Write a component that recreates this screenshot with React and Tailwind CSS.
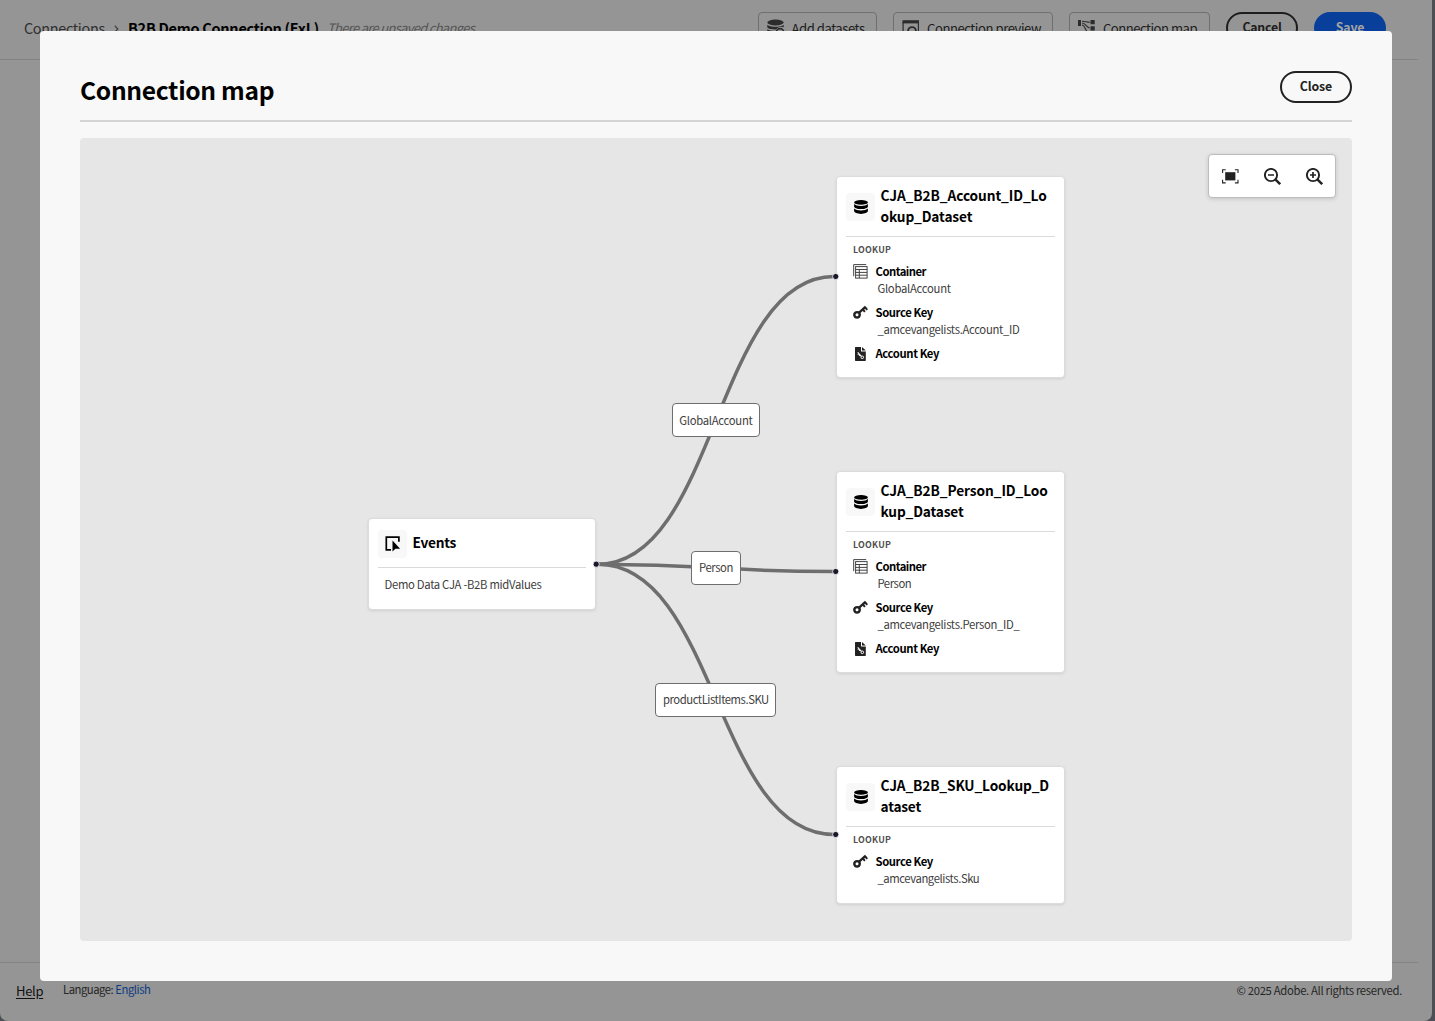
import React from "react";

function DatasetIcon() {
  return (
    <svg width="14" height="14" viewBox="0 0 14 14" fill="#000">
      <ellipse cx="7" cy="2.4" rx="6.9" ry="2.3" />
      <path d="M.1 4.1C1.4 5.4 4 6 7 6s5.6-.6 6.9-1.9v2.3C13.9 7.9 10.9 9 7 9S.1 7.9.1 6.4z" />
      <path d="M.1 8.5C1.4 9.8 4 10.4 7 10.4s5.6-.6 6.9-1.9v2.6c0 1.6-3 2.8-6.9 2.8S.1 12.7.1 11.1z" />
    </svg>
  );
}

function EventsIcon() {
  return (
    <svg width="16" height="16" viewBox="0 0 16 16" fill="none" className="mt-px ml-px">
      <path d="M6 13.8H1.3V1.2h12.6v4.5" stroke="#000" strokeWidth="1.7" />
      <path d="M7.5 4.5v11l2.9-2.8h4.7z" fill="#000" />
    </svg>
  );
}

function ContainerIcon() {
  return (
    <svg width="15" height="15" viewBox="0 0 15 15" fill="none" stroke="#444">
      <path d="M.7 12.2V.6h12.5" />
      <rect x="2.6" y="2.6" width="11.5" height="11.5" />
      <path d="M2.6 5.5h11.5M2.6 8.4h11.5M2.6 11.2h11.5M6.3 5.5v8.6" />
    </svg>
  );
}

function KeyIcon() {
  return (
    <svg width="16" height="15" viewBox="0 0 16 15" fill="none" stroke="#222">
      <circle cx="4.3" cy="10" r="2.9" strokeWidth="2.6" />
      <path d="M6.2 8 13.6 1.2" strokeWidth="2.5" />
      <path d="m10.5 4.3 2.2 2.5M12.9 2.1l2.3 2.6" strokeWidth="2.1" />
    </svg>
  );
}

function AccountKeyIcon() {
  return (
    <svg width="11" height="14" viewBox="0 0 11 14">
      <path d="M0 .6C0 .3.3 0 .6 0H6v4.4h4.8v8.8c0 .4-.2.7-.6.7H.6c-.3 0-.6-.3-.6-.7z" fill="#222" />
      <path d="M7 0l3.8 3.600H7z" fill="#222" />
      <circle cx="7.300" cy="10.300" r="1.300" fill="none" stroke="#fff" />
      <path d="M6.4 9.3 2.7 5.3M3.9 6.6 2.8 7.6M5 7.7l-.9.9" fill="none" stroke="#fff" strokeWidth="1.1" />
    </svg>
  );
}

function FitIcon() {
  return (
    <svg width="17" height="15" viewBox="0 0 17 15" fill="none">
      <rect x="3.200" y="3.200" width="10.200" height="8.200" fill="#222" />
      <path d="M.6 3.900V.7h3.100M12.900.7H16v3.200M16 10.700v3.200h-3.100M3.700 13.900H.6v-3.200" stroke="#222" strokeWidth="1.100" />
    </svg>
  );
}

function ZoomIcon({ plus }) {
  return (
    <svg width="17" height="17" viewBox="0 0 17 17" fill="none" stroke="#222">
      <circle cx="7" cy="7" r="6.1" strokeWidth="1.9" />
      <path d="m11.3 11.3 4.9 4.9" strokeWidth="2.4" />
      <path d="M4 7h6" strokeWidth="1.7" />
      {plus && <path d="M7 4v6" strokeWidth="1.7" />}
    </svg>
  );
}

function AddDatasetIcon() {
  return (
    <svg width="18" height="18" viewBox="0 0 18 18" fill="#2c2c2c">
      <ellipse cx="8.5" cy="3.5" rx="8.2" ry="2.9" />
      <path d="M.3 5.8C2 7.2 5 7.8 8.5 7.8s6.500-.6 8.200-2v2.500a6 6 0 0 0-7.700 2.200C4.500 10.500.3 9.800.3 8z" />
      <path d="M.3 10.200c1.700 1 4.200 1.600 7.700 1.700V16c-4 0-7.700-1-7.700-2.600z" />
      <circle cx="13" cy="13.5" r="3.8" fill="none" stroke="#2c2c2c" strokeWidth="1.7" />
    </svg>
  );
}

function PreviewIcon() {
  return (
    <svg width="18" height="18" viewBox="0 0 18 18" fill="none" stroke="#2c2c2c">
      <path d="M.5 2.800H17" strokeWidth="3.2" />
      <path d="M1.100 3v13.500h4M16.400 3v13" strokeWidth="1.2" />
      <circle cx="10" cy="12" r="3.9" strokeWidth="1.9" />
    </svg>
  );
}

function MapIcon() {
  return (
    <svg width="18" height="18" viewBox="0 0 18 18" fill="#2c2c2c">
      <path d="M0 1h3v6H0zM12.500 1h4.200v4.200h-4.200zM12.500 7.200h4.200v4.200h-4.200zM12.500 13.400h4.200v4.200h-4.200z" />
      <path d="M4 2.200c3 0 5 1 7.800 1M4 4c4 0 4 4.500 7.800 5M4 6c3.500 0 3 7 7.500 9" fill="none" stroke="#2c2c2c" strokeWidth="1.1" />
    </svg>
  );
}

function ToolButton({ icon, label, className }) {
  return (
    <button className={`flex h-8 items-center rounded-[4px] border border-[#6f6f6f] pl-2 text-[13.1px] text-[#1d1d1d] ${className}`}>
      {icon}
      <span className="mt-px ml-[7px] whitespace-nowrap">{label}</span>
    </button>
  );
}

function Title({ icon, lines, className, textClass }) {
  return (
    <div className={`mx-[10px] flex items-center border-b border-[#dadada] ${className}`}>
      <div className="mt-px flex h-7 w-[29px] shrink-0 items-center justify-center rounded-[4px] bg-[#f8f8f8]">{icon}</div>
      <h2 className={`ml-[5.5px] text-[13.7px] leading-[20.4px] font-bold whitespace-nowrap text-black ${textClass}`}>
        {lines.map((l) => (
          <div key={l.text} className={l.track}>{l.text}</div>
        ))}
      </h2>
    </div>
  );
}

function Field({ icon, name, nameTrack, value, valueTrack }) {
  return (
    <div className="mb-[7px] pl-[17px] text-[11.3px] leading-[17px] whitespace-nowrap">
      <div className="flex h-[17px] items-center">
        <span className="flex w-[15px] justify-center">{icon}</span>
        <span className={`ml-[7.5px] font-bold text-black ${nameTrack}`}>{name}</span>
      </div>
      {value && <div className={`h-[17px] pl-[24.4px] text-[#404040] ${valueTrack}`}>{value}</div>}
    </div>
  );
}

function Lookup({ lines, container, containerTrack, source, sourceTrack, account, className }) {
  return (
    <section className={`absolute left-[756px] w-[229px] rounded-[4px] border border-[#dcdcdc] bg-white shadow-[0_1px_3px_rgba(0,0,0,0.1)] ${className}`}>
      <div className="-mx-px">
        <Title icon={<DatasetIcon />} lines={lines} className="h-[60px]" textClass="-mt-[2px]" />
        <div className="h-[26px] pl-[17px] text-[8.8px] leading-[26px] font-bold tracking-[0.27px] text-[#505050]">LOOKUP</div>
        {container && (
          <Field icon={<ContainerIcon />} name="Container" nameTrack="tracking-[-0.51px]" value={container} valueTrack={containerTrack} />
        )}
        <Field icon={<KeyIcon />} name="Source Key" nameTrack="tracking-[-0.4px]" value={source} valueTrack={sourceTrack} />
        {account && <Field icon={<AccountKeyIcon />} name="Account Key" nameTrack="tracking-[-0.39px]" />}
      </div>
    </section>
  );
}

function EdgeLabel({ text, className }) {
  return (
    <div className={`absolute flex h-[34px] items-center justify-center rounded-[4px] border border-[#6e6e6e] bg-white text-[11.3px] leading-[17px] whitespace-nowrap text-[#404040] ${className}`}>
      {text}
    </div>
  );
}

function Canvas() {
  return (
    <div className="relative mt-4 h-[803px] overflow-hidden rounded-[4px] bg-[#e6e6e6]">
      <section className="absolute top-[380px] left-[288px] h-[92px] w-[228px] rounded-[4px] border border-[#dcdcdc] bg-white shadow-[0_1px_3px_rgba(0,0,0,0.1)]">
        <div className="-mx-px">
          <Title icon={<EventsIcon />} lines={[{ text: "Events", track: "tracking-[-0.26px]" }]} className="h-[49px]" textClass="-mt-px" />
          <p className="pl-[16.5px] text-[11.3px] leading-[32px] tracking-[-0.31px] whitespace-nowrap text-[#404040]">Demo Data CJA -B2B midValues</p>
        </div>
      </section>
      <Lookup
        className="top-[38px] h-[202px]"
        lines={[{ text: "CJA_B2B_Account_ID_Lo", track: "tracking-[-0.08px]" }, { text: "okup_Dataset", track: "tracking-[-0.13px]" }]}
        container="GlobalAccount"
        containerTrack="tracking-[-0.27px]"
        source="_amcevangelists.Account_ID"
        sourceTrack="tracking-[-0.32px]"
        account
      />
      <Lookup
        className="top-[333px] h-[202px]"
        lines={[{ text: "CJA_B2B_Person_ID_Loo", track: "tracking-[-0.08px]" }, { text: "kup_Dataset", track: "tracking-[-0.15px]" }]}
        container="Person"
        containerTrack="tracking-[-0.42px]"
        source="_amcevangelists.Person_ID_"
        sourceTrack="tracking-[-0.32px]"
        account
      />
      <Lookup
        className="top-[628px] h-[138px]"
        lines={[{ text: "CJA_B2B_SKU_Lookup_D", track: "tracking-[-0.14px]" }, { text: "ataset", track: "tracking-[-0.2px]" }]}
        source="_amcevangelists.Sku"
        sourceTrack="tracking-[-0.42px]"
      />
      <svg className="pointer-events-none absolute inset-0" width="1272" height="803" viewBox="0 0 1272 803" fill="none">
        <g stroke="#6e6e6e" strokeWidth="3.5">
          <path d="M518 426.2C636 426.2 636 138.5 754 138.5" />
          <path d="M518 426.2C636 426.2 636 433.5 754 433.5" />
          <path d="M518 426.2C636 426.2 636 696.5 754 696.5" />
        </g>
        <g fill="#1a192b" stroke="#fff" strokeWidth="0.8">
          <circle cx="516.2" cy="426.2" r="3.1" />
          <circle cx="755.7" cy="138.5" r="3.1" />
          <circle cx="755.7" cy="433.5" r="3.1" />
          <circle cx="755.7" cy="696.5" r="3.1" />
        </g>
      </svg>
      <EdgeLabel text="GlobalAccount" className="top-[265.4px] left-[591.6px] w-[88.6px] tracking-[-0.28px]" />
      <EdgeLabel text="Person" className="top-[413px] left-[611px] w-[50px] pb-px tracking-[-0.42px]" />
      <EdgeLabel text="productListItems.SKU" className="top-[544.5px] left-[575.4px] w-[121px] tracking-[-0.46px]" />
      <div className="absolute top-[16px] right-[16px] flex h-11 w-32 items-center gap-[25px] rounded-[4px] border border-[#bcbcbc] bg-white pl-[13px] shadow-[0_1px_4px_rgba(0,0,0,0.15)]">
        <FitIcon />
        <ZoomIcon />
        <ZoomIcon plus />
      </div>
    </div>
  );
}

export default function App() {
  return (
    <div className="relative h-[1021px] w-[1435px] overflow-hidden bg-[#4d4f57] font-['Noto_Sans_CJK_JP',sans-serif]">
      <div className="flex h-[1021px] w-[1432px] flex-col rounded-b-[8px] bg-[#959595] pr-[14px]">
        <header className="flex h-[60px] shrink-0 items-start border-b border-[#838383] pt-3 pl-6">
          <nav className="flex h-8 items-center whitespace-nowrap">
            <span className="w-[90px] text-[14.4px] tracking-[-0.31px] text-[#2f2f2f]">Connections</span>
            <svg width="5" height="8" viewBox="0 0 5 8" fill="none" stroke="#444" strokeWidth="1.3" className="mt-px">
              <path d="m.8.8 3 3.2-3 3.2" />
            </svg>
            <span className="ml-[9px] w-[199px] text-[14.5px] font-bold tracking-[-0.27px] text-black">B2B Demo Connection (ExL)</span>
            <span className="text-[13px] tracking-[-0.7px] text-[#555] italic">There are unsaved changes</span>
          </nav>
          <div className="mr-8 ml-auto flex gap-4">
            <ToolButton icon={<AddDatasetIcon />} label="Add datasets" className="w-[119.5px] tracking-[-0.46px]" />
            <ToolButton icon={<PreviewIcon />} label="Connection preview" className="w-[160px] tracking-[-0.45px]" />
            <ToolButton icon={<MapIcon />} label="Connection map" className="w-[141px] tracking-[-0.5px]" />
            <button className="h-8 w-[72px] rounded-full border-2 border-[#1d1d1d] pb-[2px] text-[12.3px] leading-[26px] font-bold tracking-[-0.2px] text-[#1d1d1d]">Cancel</button>
            <button className="h-8 w-[72px] rounded-full bg-[#083f9b] pb-[2px] text-[12.3px] leading-[30px] font-bold tracking-[-0.2px] text-[#a3a3a3]">Save</button>
          </div>
        </header>
        <footer className="mt-auto flex h-[59px] shrink-0 items-start border-t border-[#838383] pl-4 whitespace-nowrap text-[#262626]">
          <a className="mt-[18px] w-[47px] text-[13px] leading-5 tracking-[-0.3px] text-[#111] underline underline-offset-2">Help</a>
          <p className="mt-[17px] text-[11.3px] leading-[18px] tracking-[-0.48px]">
            Language: <span className="text-[#0d3b80]">English</span>
          </p>
          <p className="mt-[18px] mr-4 ml-auto text-[11.3px] leading-[18px] tracking-[-0.33px]">© 2025 Adobe. All rights reserved.</p>
        </footer>
      </div>
      <div role="dialog" className="absolute top-[31px] left-10 h-[950px] w-[1352px] rounded-[4px] bg-[#f8f8f8] p-10">
        <div className="flex h-[51px] items-start justify-between border-b-2 border-[#d4d4d4]">
          <h1 className="text-[24.6px] leading-[36px] font-bold tracking-[-0.32px] text-black">Connection map</h1>
          <button className="h-8 w-[72px] rounded-full border-2 border-[#222] pb-[2px] text-[12.3px] leading-[26px] font-bold tracking-[-0.08px] text-[#222]">Close</button>
        </div>
        <Canvas />
      </div>
    </div>
  );
}
